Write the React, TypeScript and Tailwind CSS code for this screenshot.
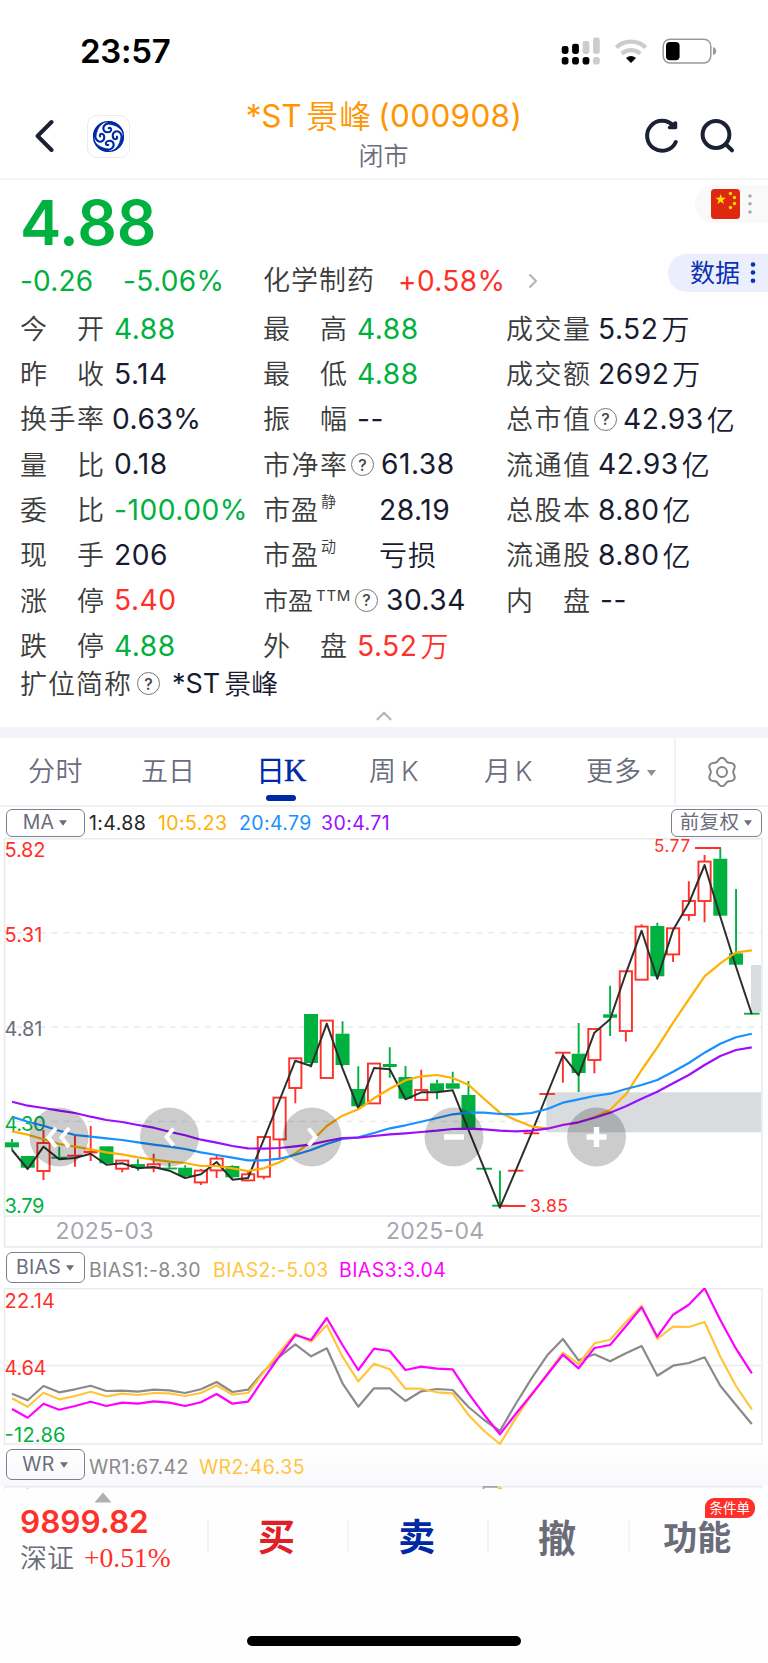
import React from 'react';
import { ChevronRight, ChevronUp } from 'lucide-react';

const STEP = 15.74;
const px = (i: number) => 12 + i * STEP;

// [direction, high, body top, body bottom, low]
type Candle = ['r' | 'g', number, number, number, number];

const candles: Candle[] = [
  ['g', 301, 304.3, 309.3, 312],
  ['g', 318, 318, 329.7, 331],
  ['r', 292, 304.7, 333.3, 342],
  ['g', 308.7, 318.7, 320.7, 321.3],
  ['r', 298, 316.7, 318.7, 328.7],
  ['r', 288, 312.7, 315.3, 323],
  ['g', 308.3, 308.3, 325.3, 326],
  ['r', 322.3, 322.3, 331, 334.3],
  ['g', 321.3, 326, 330, 332.7],
  ['r', 315.7, 326, 330, 334.3],
  ['g', 325, 329.7, 331.3, 331.3],
  ['g', 327.3, 329.7, 338, 339.3],
  ['r', 331, 332.3, 344.7, 347],
  ['r', 318, 320.3, 332.7, 340],
  ['g', 327.3, 328, 339.3, 341.3],
  ['r', 333.7, 336, 342.7, 343.3],
  ['r', 298.7, 298.7, 339, 341.3],
  ['r', 259.3, 259.3, 301.7, 320.7],
  ['r', 220, 220, 250.3, 265.3],
  ['g', 176, 176, 225, 229.3],
  ['r', 182.3, 182.3, 240.3, 240.3],
  ['g', 183.3, 195.7, 227, 228],
  ['g', 228.3, 251, 268.3, 270.3],
  ['r', 225.3, 225.3, 265.7, 265.7],
  ['g', 209.3, 226, 229, 239.7],
  ['g', 228, 239, 260.7, 260.7],
  ['r', 231.7, 251.7, 262.3, 262.3],
  ['g', 241.7, 245.3, 253, 261.3],
  ['g', 233.7, 245.3, 250.7, 251.3],
  ['g', 243, 257, 292, 292],
  ['g', 330.7, 330.7, 330.7, 330.7],
  ['g', 332.7, 367.7, 367.7, 367.7],
  ['r', 332.7, 332.7, 332.7, 332.7],
  ['r', 295.3, 295.3, 295.3, 295.3],
  ['r', 256, 256, 256, 256],
  ['r', 214.7, 214.7, 214.7, 244.7],
  ['g', 185, 215.7, 235, 254],
  ['r', 190.7, 190.7, 222.3, 235.3],
  ['g', 147.7, 176.3, 179.7, 198],
  ['r', 133, 133, 193.3, 203.7],
  ['r', 86.3, 88.3, 142, 142],
  ['g', 84.7, 88, 138.3, 140.3],
  ['r', 90, 90, 116.7, 124],
  ['r', 43.3, 62.7, 77.3, 82.7],
  ['r', 17, 23.3, 63.3, 84.3],
  ['g', 10.3, 20.7, 77.7, 77.7],
  ['g', 51, 115.3, 126.7, 126.7],
  ['g', 175.7, 175.7, 175.7, 175.7]
];

const ma1 = [312, 331, 308.7, 321.3, 320, 315.7, 326.7, 325.3, 330.3, 329, 332.7, 340, 336.3, 324, 341.7, 340, 301.3, 262, 222.7, 228, 185.7, 230.3, 270.3, 230, 231.3, 261.3, 254.3, 254.3, 252.3, 292, 330.7, 369.7, 332.7, 295.3, 256, 217.3, 237.3, 194.7, 181.3, 135.3, 92.7, 140.7, 92, 65.3, 27, 78.7, 128.7, 176.3];
const ma10 = [293.3, 296.7, 301.3, 306, 308.7, 311.3, 314.3, 316.3, 319.3, 321.7, 323.7, 325, 328, 328, 330.3, 333, 330.3, 324.3, 315.3, 303.7, 288, 277.7, 271.3, 260.3, 250.7, 242.3, 238.3, 237, 240, 246.7, 261, 274.7, 282, 288.3, 290.7, 286.7, 284.3, 279, 272, 256.3, 232, 209.3, 184.7, 161.3, 138.3, 125.3, 114.3, 112.3];
const ma20 = [278.7, 283.7, 287.7, 292.7, 297, 298.7, 300.3, 302, 304.3, 306.7, 308.7, 311, 314.3, 317, 319.7, 322.3, 322.3, 320.7, 316.7, 312, 306, 301, 299.3, 295, 290.3, 287.3, 283.7, 280, 276.3, 274.7, 274.7, 276, 276.3, 275, 271, 264.7, 261.3, 258, 255.7, 251, 247, 242, 233.7, 225, 214.7, 205.7, 199.3, 195.7];
const ma30 = [263.7, 267.7, 270, 272.7, 275, 278.7, 282, 284, 287, 289.7, 293.7, 297.3, 301.7, 304.7, 308, 310.3, 310.7, 310, 308.3, 306.3, 303, 300, 299.7, 298, 296.3, 295.3, 294, 292.7, 291, 290.7, 291.3, 292.7, 293.3, 292.7, 290.7, 287, 284.3, 279.7, 274.7, 268.3, 260.7, 253.7, 245.3, 237, 227, 218, 212, 209.3];

const bias1 = [105.7, 112.3, 98, 104.3, 101.3, 97.7, 103, 102.7, 103.7, 101.7, 102.3, 105, 101.3, 94, 104, 101.7, 83.3, 68.7, 56.3, 68.3, 60.3, 95.3, 118.7, 100.3, 100.3, 113, 103.3, 101, 102, 119, 132, 143, 116, 90.7, 67.3, 51, 72.3, 66.3, 73.3, 65.3, 58, 87.7, 77.7, 75, 69.3, 97.7, 117, 136];
const bias2 = [110.3, 118.7, 104.7, 111.3, 108, 103.7, 108.3, 105.7, 107, 105, 105.3, 108, 105, 97.3, 106.7, 105, 84, 64, 45.7, 53.7, 37, 68.7, 93.3, 75.7, 81.3, 100.7, 100.7, 104.3, 105.3, 127, 143, 156, 130.3, 107, 86, 64.7, 76, 55.3, 51.7, 34, 17.7, 51, 38.7, 39, 34, 68.7, 98, 121.3];
const bias3 = [121, 129.7, 115.7, 121.7, 118, 113.7, 118, 114.7, 115.7, 113.3, 114.7, 118, 114.3, 106, 115.7, 113.7, 90.7, 68, 47, 52, 30, 57, 82, 60.7, 63, 82, 78.7, 80.7, 81.3, 105.3, 126.7, 146.3, 126, 106.7, 86.7, 66.7, 80.3, 60, 57, 38.3, 19.3, 48.7, 26.7, 16.7, 0.3, 32, 60.7, 85.3];

const toPoints = (values: number[]) => values.map((v, i) => `${px(i).toFixed(1)},${v}`).join(' ');

const Line = ({ values, color, width = 2.2 }: { values: number[]; color: string; width?: number }) => (
  <polyline points={toPoints(values)} fill="none" stroke={color} strokeWidth={width} strokeLinejoin="round" />
);

const AxisText = ({ x, y, w, color, size = 20, children }: { x: number; y: number; w: number; color: string; size?: number; children: string }) => (
  <text x={x} y={y} fill={color} fontSize={size} textLength={w} lengthAdjust="spacing">{children}</text>
);

const Help = () => (
  <span className="flex size-[23px] shrink-0 items-center justify-center rounded-full border-[1.5px] border-[#777] text-[16px] leading-none font-medium text-[#444]">?</span>
);

const Label = ({ text }: { text: string }) => (
  <span className="flex w-[84px] shrink-0 justify-between pt-[3px] text-[27px] font-[350] text-[#3c3c3c]">
    {text.split('').map((c, i) => <span key={i}>{c}</span>)}
  </span>
);

const tones = {
  green: 'text-[#00b140]',
  red: 'text-[#ff3029]',
  dark: 'text-[#171b30]'
};

interface StatProps {
  label: React.ReactNode;
  value: string;
  unit?: string;
  tone?: keyof typeof tones;
  gap?: string;
}

const Stat = ({ label, value, unit, tone = 'dark', gap = 'ml-[10px]' }: StatProps) => (
  <div className="flex h-[45.3px] items-center whitespace-nowrap">
    {typeof label === 'string' ? <Label text={label} /> : label}
    <span className={`${gap} ${tones[tone]} text-[28.2px] tracking-[0.5px]`}>{value}</span>
    {unit && <span className={`${tones[tone]} ml-[3px] pt-[3px] text-[28px] font-[350]`}>{unit}</span>}
  </div>
);

const PeLabel = ({ sup }: { sup: string }) => (
  <span className="flex w-[106px] pt-[3px] text-[27px] font-[350] text-[#3c3c3c]">
    <span className="tracking-[1px]">市盈</span>
    <span className="ml-[2px] text-[15px]">{sup}</span>
  </span>
);

const StatusBar = () => (
  <div className="flex h-[96px] items-center justify-between pt-[7px] pr-[51px] pl-[80px]">
    <span className="text-[33px] font-semibold tracking-[-0.3px] text-black">23:57</span>
    <svg width="156" height="30" viewBox="561 36 156 30" className="mb-[1px]">
      {[561.7, 572.1, 582.6, 593].map((x, i) => (
        <g key={x}>
          <rect x={x} y={[46, 43.7, 41, 37.5][i]} width="6.8" height={[8, 10.3, 13, 16.5][i]} rx="2.4" fill={i < 2 ? '#000' : '#ccc'} />
          <rect x={x} y="57" width="6.8" height="7.6" rx="2.8" fill={i < 3 ? '#000' : '#ccc'} />
        </g>
      ))}
      <g fill="none" stroke="#ccc" strokeWidth="4.2">
        <path d="M616.3 47.5 A21.5 21.5 0 0 1 645.7 47.5" />
        <path d="M621.8 53.8 A13.5 13.5 0 0 1 640.2 53.8" />
      </g>
      <path d="M631 63 L626 58 Q631 53.8 636 58 Z" fill="#000" />
      <rect x="663.2" y="39.2" width="47.6" height="23.8" rx="7" fill="none" stroke="#999" strokeWidth="1.5" />
      <rect x="666" y="42" width="13.6" height="18.2" rx="4" fill="#000" />
      <path d="M713 47 Q716.2 48 716.2 51 Q716.2 54 713 55 Z" fill="#999" />
    </svg>
  </div>
);

const Logo = () => (
  <div className="ml-[33px] flex size-[43px] items-center justify-center rounded-[10px] border-[1.5px] border-[#ebebeb]">
    <svg width="33" height="33" viewBox="-16.5 -16.5 33 33" fill="none" stroke="#0029a5">
      <circle r="14.9" strokeWidth="1.4" />
      {[0, 90, 180, 270].map((a) => (
        <g key={a} transform={`rotate(${a})`} strokeLinecap="round">
          <path d="M3 -13.6 C-2.5 -14 -6 -10.5 -5 -7 C-4 -3.6 1.4 -3.4 2.6 -6.2 C3.1 -8 1.6 -9.2 0.2 -8.4" strokeWidth="2.1" />
          <path d="M1 -15 C7.5 -14.8 13 -10.8 14.6 -3.8 C11 -9.6 6.5 -11.6 -1 -12.6 Z" fill="#0029a5" strokeWidth="0.5" />
        </g>
      ))}
    </svg>
  </div>
);

const Header = () => (
  <header className="relative flex h-[84px] items-center border-b-2 border-[#f3f3f5] pb-[2px] pl-[35px]">
    <svg width="19" height="34" viewBox="0 0 19 34" fill="none" stroke="#1c2033" strokeWidth="4" strokeLinecap="round" strokeLinejoin="round">
      <path d="M16.5 3 L2.6 17 L16.5 31" />
    </svg>
    <Logo />
    <div className="absolute inset-x-0 top-0 flex flex-col items-center">
      <h1 className="flex h-[39px] items-center text-[31.5px] whitespace-nowrap text-[#ff9500]">
        <span className="tracking-[-0.3px]">*ST</span>
        <span className="ml-[5px] pt-[2px] text-[32px] font-[350] tracking-[1px]">景峰</span>
        <span className="ml-[6px] tracking-[0.3px]">(000908)</span>
      </h1>
      <p className="flex h-[44px] items-center pr-px text-[25px] font-[350] text-[#6b6d7c]">闭市</p>
    </div>
    <svg className="mr-[32px] ml-auto" width="92" height="40" viewBox="643 116 92 40" fill="none" stroke="#1c2033" strokeWidth="4" strokeLinecap="round" strokeLinejoin="round">
      <path d="M674.8 142 A15 15 0 1 1 672.5 126" />
      <path d="M674.5 123 L674.5 127.6 L668.5 127.6 Z" strokeWidth="3.5" fill="#1c2033" />
      <circle cx="715" cy="134.5" r="13.4" />
      <path d="M725 144.5 L731 150.3" />
    </svg>
  </header>
);

const STAR = 'M0 -5.4 L1.3 -1.7 L5.2 -1.7 L2.1 0.7 L3.2 4.4 L0 2.2 L-3.2 4.4 L-2.1 0.7 L-5.2 -1.7 L-1.3 -1.7 Z';

const Quote = () => (
  <section className="relative h-[547px] pl-[20px]">
    <div className="flex h-[84px] items-center text-[62px] font-semibold tracking-[-0.1px] text-[#00b140]">4.88</div>
    <div className="flex h-[33px] items-center text-[28px] whitespace-nowrap text-[#00b140]">
      <span className="w-[103px] tracking-[0.2px]">-0.26</span>
      <span className="w-[140px] tracking-[0.4px]">-5.06%</span>
      <span className="w-[135px] pt-[2px] text-[27px] font-[350] tracking-[1px] text-[#3c3c3c]">化学制药</span>
      <span className="w-[119px] tracking-[0.4px] text-[#ff3029]">+0.58%</span>
      <ChevronRight size={24} strokeWidth={2} className="ml-1 text-[#b5b5b5]" />
    </div>

    <div className="absolute top-[5px] right-0 flex h-[38px] w-[73px] items-center rounded-l-full bg-[#f9f9f9] pl-[16px]">
      <svg width="29" height="30" viewBox="0 0 29 30">
        <rect width="29" height="30" rx="3.5" fill="#de2910" />
        <path d={STAR} transform="translate(9.7 10.5)" fill="#ffde00" />
        <g fill="#ffde00">
          <circle cx="19.5" cy="4.5" r="1.7" />
          <circle cx="23.5" cy="8.5" r="1.7" />
          <circle cx="23.5" cy="14.5" r="1.7" />
          <circle cx="19.5" cy="18.5" r="1.7" />
        </g>
      </svg>
      <svg width="4" height="22" viewBox="0 0 4 22" className="ml-[8px]" fill="#a8a8a8">
        <circle cx="2" cy="3" r="1.7" />
        <circle cx="2" cy="10.7" r="1.7" />
        <circle cx="2" cy="19" r="1.7" />
      </svg>
    </div>
    <div className="absolute top-[74px] right-0 flex h-[38px] w-[100px] items-center rounded-l-full bg-[#ebeffd] pt-[2px] pl-[22px] text-[25px] text-[#0a33b0]">
      数据
      <svg width="6" height="24" viewBox="0 0 6 24" className="ml-[10px] shrink-0 -translate-y-px" fill="#0a33b0">
        <circle cx="3" cy="3.5" r="2.3" />
        <circle cx="3" cy="11.5" r="2.3" />
        <circle cx="3" cy="19.8" r="2.3" />
      </svg>
    </div>

    <div className="flex pt-[9px]">
      <div className="w-[243px]">
        <Stat label="今开" value="4.88" tone="green" />
        <Stat label="昨收" value="5.14" />
        <Stat label="换手率" value="0.63%" gap="ml-[8px]" />
        <Stat label="量比" value="0.18" />
        <Stat label="委比" value="-100.00%" tone="green" />
        <Stat label="现手" value="206" />
        <Stat label="涨停" value="5.40" tone="red" />
        <Stat label="跌停" value="4.88" tone="green" />
      </div>
      <div className="w-[243px]">
        <Stat label="最高" value="4.88" tone="green" />
        <Stat label="最低" value="4.88" tone="green" />
        <Stat label="振幅" value="--" />
        <Stat
          label={<><Label text="市净率" /><span className="ml-[4px]"><Help /></span></>}
          value="61.38"
          gap="ml-[7px]"
        />
        <Stat label={<PeLabel sup="静" />} value="28.19" />
        <div className="flex h-[45.3px] items-center">
          <PeLabel sup="动" />
          <span className="ml-[10px] pt-[2px] text-[28px] font-[350] tracking-[1px] text-[#171b30]">亏损</span>
        </div>
        <Stat
          label={
            <>
              <span className="pt-[3px] text-[25px] font-[350] text-[#3c3c3c]">市盈</span>
              <span className="mr-[4px] mb-[9px] ml-[3px] text-[15px] tracking-[0.7px] text-[#3c3c3c]">TTM</span>
              <Help />
            </>
          }
          value="30.34"
          gap="ml-[8px]"
        />
        <Stat label="外盘" value="5.52" unit="万" tone="red" />
      </div>
      <div>
        <Stat label="成交量" value="5.52" unit="万" gap="ml-[8px]" />
        <Stat label="成交额" value="2692" unit="万" gap="ml-[8px]" />
        <Stat
          label={<><Label text="总市值" /><span className="ml-[4px]"><Help /></span></>}
          value="42.93"
          unit="亿"
          gap="ml-[6px]"
        />
        <Stat label="流通值" value="42.93" unit="亿" gap="ml-[8px]" />
        <Stat label="总股本" value="8.80" unit="亿" gap="ml-[8px]" />
        <Stat label="流通股" value="8.80" unit="亿" gap="ml-[8px]" />
        <Stat label="内盘" value="--" />
      </div>
    </div>

    <div className="-mt-[3px] flex h-[37px] items-center text-[27px] whitespace-nowrap">
      <span className="mr-[5px] pt-[3px] font-[350] tracking-[1px] text-[#3c3c3c]">扩位简称</span>
      <Help />
      <span className="ml-[12px] text-[27px] text-[#171b30]">*ST</span>
      <span className="ml-[4px] pt-[3px] font-[350] text-[#171b30]">景峰</span>
    </div>
    <ChevronUp size={26} strokeWidth={2} className="mt-px -ml-[20px] w-[768px] text-[#b5b5b5]" />
  </section>
);

// outline with six soft lobes
const gearPath =
  Array.from({ length: 73 }, (_, i) => {
    const a = (i * 5 * Math.PI) / 180;
    const r = 12.7 + 1.5 * Math.cos(6 * a);
    return `${i ? 'L' : 'M'}${(15 + r * Math.sin(a)).toFixed(2)} ${(15 - r * Math.cos(a)).toFixed(2)}`;
  }).join(' ') + 'Z';

const Caret = ({ className }: { className?: string }) => (
  <svg width="9" height="6" viewBox="0 0 9 6" className={`${className} shrink-0`} fill="currentColor">
    <path d="M0 0 H9 L4.5 6 Z" />
  </svg>
);

const Tabs = () => (
  <nav className="flex h-[69px] items-center border-b-2 border-[#efeff2] pt-[2px] pl-[28px] text-[27px] font-[350] whitespace-nowrap text-[#6b6d7c]">
    <span className="w-[113px] tracking-[0.5px]">分时</span>
    <span className="w-[115px]">五日</span>
    <span className="relative flex h-full w-[113px] items-center pb-[2px] text-[29px] font-normal text-[#0029a5]">
      日<span className="-ml-px font-['Liberation_Serif','Noto_Sans_CJK_SC',serif] text-[31px] [-webkit-text-stroke:0.4px]">K</span>
      <span className="absolute bottom-[4px] left-[10px] h-[6px] w-[30px] rounded-full bg-[#0029a5]" />
    </span>
    <span className="flex w-[115px] items-center">周<span className="ml-[5px]">K</span></span>
    <span className="flex w-[102px] items-center">月<span className="ml-[4px]">K</span></span>
    <span className="flex w-[88px] items-center tracking-[1px]">更多<Caret className="ml-[5px] text-[#8e8e8e]" /></span>
    <span className="-mt-[2px] flex h-[67px] flex-1 items-center justify-center border-l-2 border-[#f2f2f5]">
      <svg width="30" height="30" viewBox="0 0 30 30" fill="none" stroke="#858585" strokeWidth="2">
        <path d={gearPath} />
        <circle cx="15" cy="15" r="5" />
      </svg>
    </span>
  </nav>
);

const Picker = ({ label, className }: { label: string; className: string }) => (
  <button className={`${className} flex shrink-0 items-center justify-center rounded-[6px] border-[1.5px] border-[#7d7f8e] pr-px text-[19.5px] leading-none tracking-[0.3px] text-[#6b6d7c]`}>
    {label}
    <Caret className="ml-[5px] w-[8px]" />
  </button>
);

const navButtons = [
  { x: 59, icon: 'M56 290 L48.5 299.5 L56 309 M69 290 L61.5 299.5 L69 309' },
  { x: 169.5, icon: 'M173.5 290.5 L166.5 299 L173.5 307.5' },
  { x: 312, icon: 'M308.5 290.5 L315.5 299 L308.5 307.5' },
  { x: 454, icon: 'M444 299 H464' },
  { x: 596.5, icon: 'M586.5 299 H606.5 M596.5 289 V309' }
];

const KChart = () => (
  <svg width="768" height="412" viewBox="0 0 768 412" className="block overflow-visible">
    <g fill="none" stroke="#e8eaeb" strokeWidth="1.6">
      <path d="M4.5 409 V0.8 H762 V409 Z" />
      <path d="M4.5 378 H762" />
      <path d="M4.5 94.7 H762 M4.5 189 H762 M4.5 283.5 H762" strokeDasharray="6 5.8" />
    </g>
    <rect x="546.3" y="254.3" width="214.7" height="40" fill="#d8dcdf" />
    <rect x="751" y="127" width="10" height="47.3" fill="#d8dcdf" />

    {candles.map(([dir, high, top, bottom, low], i) => {
      const x = px(i);
      const color = dir === 'r' ? '#ff3029' : '#00b140';
      const hollow = dir === 'r' && bottom - top > 3.5;
      return (
        <g key={i} stroke={color} strokeWidth="1.9">
          <path d={`M${x} ${high} V${top} M${x} ${bottom} V${low}`} />
          {bottom - top < 2.5 ? (
            <path d={`M${x - 7.8} ${(top + bottom) / 2} H${x + 7.8}`} />
          ) : hollow ? (
            <rect x={x - 6.1} y={top + 0.3} width="12.2" height={bottom - top - 0.6} fill="none" />
          ) : (
            <rect x={x - 7} y={top} width="14" height={bottom - top} fill={color} stroke="none" />
          )}
        </g>
      );
    })}

    <g fontFamily="Inter, sans-serif">
      <AxisText x={4.5} y={19} w={41} color="#ff3029">5.82</AxisText>
      <AxisText x={4.5} y={104} w={38} color="#ff3029">5.31</AxisText>
      <AxisText x={4.5} y={198} w={38} color="#6b6d7c">4.81</AxisText>
      <AxisText x={4.5} y={292.5} w={41} color="#00b140">4.30</AxisText>
      <AxisText x={4.5} y={375} w={40} color="#00b140">3.79</AxisText>
      <AxisText x={55.5} y={401} w={98} color="#a6a6b0" size={23}>2025-03</AxisText>
      <AxisText x={386} y={401} w={98} color="#a6a6b0" size={23}>2025-04</AxisText>
      <AxisText x={654} y={13.6} w={36} color="#ff3029" size={17}>5.77</AxisText>
      <AxisText x={530} y={373.5} w={38} color="#ff3029" size={17.5}>3.85</AxisText>
    </g>
    <path d="M695 10 H721 M500 368 H525.5" stroke="#ff3029" strokeWidth="1.8" />

    <Line values={ma1} color="#2e2e2e" width={2} />
    <Line values={ma10} color="#ffb000" />
    <Line values={ma20} color="#1890ff" />
    <Line values={ma30} color="#9b0fff" />

    {navButtons.map((b) => (
      <g key={b.x}>
        <circle cx={b.x} cy="299" r="29.5" fill="#000" fillOpacity="0.2" />
        <path d={b.icon} fill="none" stroke="#fff" strokeWidth={b.x > 400 ? 5.5 : 4} />
      </g>
    ))}
  </svg>
);

const BiasChart = () => (
  <svg width="768" height="158" viewBox="0 0 768 158" className="block">
    <path d="M4.5 156 V0.8 H762 V156 Z M4.5 77.5 H762" fill="none" stroke="#e9eced" strokeWidth="1.4" />
    <g fontFamily="Inter, sans-serif">
      <AxisText x={4.5} y={20} w={50.5} color="#ff3029">22.14</AxisText>
      <AxisText x={4.5} y={87} w={42} color="#ff3029">4.64</AxisText>
      <AxisText x={4.5} y={154} w={61} color="#00b140">-12.86</AxisText>
    </g>
    <Line values={bias1} color="#8a8a8a" />
    <Line values={bias2} color="#ffc53d" />
    <Line values={bias3} color="#ff00ff" />
  </svg>
);

const actions = [
  { label: '买', style: 'text-[#df2026] text-[37px]' },
  { label: '卖', style: 'text-[#0029a5] text-[37px]' },
  { label: '撤', style: 'text-[#6b6c7a] text-[38px]' },
  { label: '功能', style: 'text-[#6b6c7a] text-[34px]', badge: '条件单' }
];

const TradeBar = () => (
  <footer className="relative flex h-[174px] items-start bg-[#fefefe]">
    <div className="w-[207px] pl-[20px] whitespace-nowrap">
      <svg width="18" height="11" viewBox="0 0 18 11" className="mt-[3px] ml-[74px] block">
        <path d="M9 0.5 L17.5 10.5 H0.5 Z" fill="#b0b0b0" />
      </svg>
      <div className="flex h-[38px] items-center text-[31.5px] font-semibold text-[#ff3029]">9899.82</div>
      <div className="flex h-[36px] items-center pt-px text-[27px]">
        <span className="font-[350] text-[#6b6d7c]">深证</span>
        <span className="-mt-[3px] ml-[10px] font-['Liberation_Serif',serif] text-[27.5px] text-[#ff3029]">+0.51%</span>
      </div>
    </div>
    {actions.map((a) => (
      <div key={a.label} className="relative mt-[31px] flex h-[33px] w-[140.2px] items-center justify-center border-l-2 border-[#f3f3f8] pt-[2px] pr-[3px]">
        <span className={`${a.style} leading-none font-bold`}>{a.label}</span>
        {a.badge && (
          <span className="absolute -top-[22px] right-[13px] flex h-[20px] w-[50px] items-center justify-center rounded-[9px] rounded-bl-none bg-[#ff3029] pt-px text-[13.5px] leading-none text-white">
            {a.badge}
          </span>
        )}
      </div>
    ))}
    <div className="absolute bottom-[17px] left-[247px] h-[10px] w-[274px] rounded-full bg-black" />
  </footer>
);

const App = () => {
  return (
    <div className="flex h-[1663px] w-[768px] flex-col overflow-hidden bg-white font-['Inter','Noto_Sans_CJK_SC',sans-serif]">
      <StatusBar />
      <Header />
      <Quote />
      <div className="h-[11px] shrink-0 bg-[#f3f4fa]" />
      <Tabs />

      <div className="flex h-[31px] items-center px-[6px] text-[19.5px] tracking-[0.4px] whitespace-nowrap">
        <Picker label="MA" className="h-[28px] w-[79px]" />
        <span className="ml-[4px] w-[69px] pt-[2px] text-[#262626]">1:4.88</span>
        <span className="w-[81px] pt-[2px] text-[#ffb000]">10:5.23</span>
        <span className="w-[82px] pt-[2px] text-[#1890ff]">20:4.79</span>
        <span className="pt-[2px] text-[#9b0fff]">30:4.71</span>
        <Picker label="前复权" className="ml-auto h-[28px] w-[91px]" />
      </div>
      <KChart />

      <div className="flex h-[38px] items-center pl-[6px] text-[19.5px] tracking-[0.4px] whitespace-nowrap">
        <Picker label="BIAS" className="-mt-[3px] h-[31px] w-[79px]" />
        <span className="ml-[4px] w-[124px] pt-[3px] text-[#8a8a8a]">BIAS1:-8.30</span>
        <span className="w-[126px] pt-[3px] text-[#ffc53d]">BIAS2:-5.03</span>
        <span className="pt-[3px] text-[#ff00ff]">BIAS3:3.04</span>
      </div>
      <BiasChart />

      <div className="flex h-[40px] items-center bg-gradient-to-b from-white to-[#f9f9fc] pl-[6px] text-[19.5px] tracking-[0.4px] whitespace-nowrap">
        <Picker label="WR" className="-mt-[3px] h-[31px] w-[79px]" />
        <span className="ml-[4px] w-[110px] pt-[3px] text-[#8a8a8a]">WR1:67.42</span>
        <span className="pt-[3px] text-[#ffc53d]">WR2:46.35</span>
      </div>
      <svg width="768" height="3" viewBox="0 0 768 3" className="block shrink-0">
        <path d="M4.5 3 V0.7 H762 V3" fill="none" stroke="#e8eaf0" strokeWidth="1.4" />
        <path d="M483.5 3 V0.9 H498" fill="none" stroke="#a5a5a5" strokeWidth="1.8" />
        <path d="M497.5 3 L500 0 L503 3 Z M26.5 3 L27.5 1 L28.5 3 Z" fill="#ffc53d" />
      </svg>
      <TradeBar />
    </div>
  );
};

export default App;
